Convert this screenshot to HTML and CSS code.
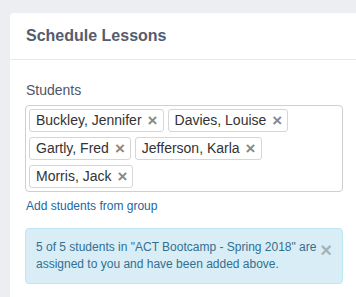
FILE: index.html
```html
<!DOCTYPE html>
<html>
<head>
    <title>Schedule Lessons</title>
    <link rel="stylesheet" href="styles.css">
</head>
<body>
    <div class="card">
        <div class="card-header">Schedule Lessons</div>
        <div class="card-body">
            <label class="field-label">Students</label>
            <div class="tag-input">
                <span class="tag">Buckley, Jennifer <span class="tag-remove">&times;</span></span>
                <span class="tag">Davies, Louise <span class="tag-remove">&times;</span></span>
                <span class="tag">Gartly, Fred <span class="tag-remove">&times;</span></span>
                <span class="tag">Jefferson, Karla <span class="tag-remove">&times;</span></span>
                <span class="tag">Morris, Jack <span class="tag-remove">&times;</span></span>
            </div>
            <a class="group-link" href="#">Add students from group</a>

            <div class="alert">
                <div class="alert-text">5 of 5 students in "ACT Bootcamp - Spring 2018" are assigned to you and have been added above.</div>
                <span class="alert-close">&times;</span>
            </div>
        </div>
    </div>
</body>
</html>
```

FILE: styles.css
```css
html, body {
    margin: 0;
    overflow: hidden;
}
body {
    font-family: "Liberation Sans", Arial, sans-serif;
    background-color: #eceef1;
    padding: 13px 0 0 10px;
    height: 297px;
    box-sizing: border-box;
}
.card {
    background-color: #fff;
    width: 348px;
    height: 284px;
    border-radius: 4px 0 0 0;
}
.card-header {
    height: 46px;
    line-height: 46px;
    padding: 0 16px;
    font-size: 16px;
    font-weight: bold;
    color: #555c6d;
    border-bottom: 1px solid #e6e8eb;
}
.card-body {
    padding: 20px 15px 0 15px;
}
.field-label {
    display: block;
    font-size: 14px;
    line-height: 20px;
    color: #4f5566;
    padding-left: 1px;
    margin-bottom: 5px;
}
.tag-input {
    display: flex;
    flex-wrap: wrap;
    gap: 5px 4px;
    padding: 3px;
    border: 1px solid #cfcfcf;
    border-radius: 4px;
}
.tag {
    display: inline-flex;
    align-items: center;
    gap: 6px;
    height: 23px;
    box-sizing: border-box;
    padding: 0 5px 0 6px;
    border: 1px solid #d6d6d6;
    border-radius: 3px;
    font-size: 14px;
    line-height: 21px;
    color: #333;
}
.tag-remove {
    font-size: 17px;
    font-weight: bold;
    color: #888;
}
.group-link {
    display: block;
    margin-top: 6px;
    font-size: 12px;
    line-height: 17px;
    color: #21679f;
    text-decoration: none;
    padding-left: 1px;
}
.alert {
    display: flex;
    gap: 2px;
    margin-top: 13px;
    padding: 10px;
    background-color: #d9edf7;
    border: 1px solid #bce8f1;
    border-radius: 4px;
    color: #31708f;
    font-size: 12px;
    line-height: 17px;
}
.alert-text {
    flex: 1;
}
.alert-close {
    width: 10px;
    display: flex;
    justify-content: flex-end;
    font-size: 20px;
    font-weight: bold;
    line-height: 22px;
    color: #a3b4bc;
}
```
